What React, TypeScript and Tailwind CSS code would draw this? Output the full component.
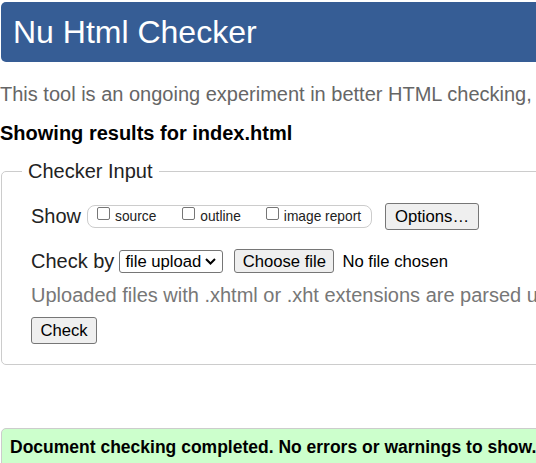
import React from 'react';

function Box({ label, className = '' }: { label: string; className?: string }) {
  return (
    <span className={`flex items-center ${className}`}>
      <span className="mb-[6px] h-[13px] w-[13px] rounded-[2px] border border-[#767676] bg-white" />
      <span className="ml-[5px] text-[13.75px] leading-[16px] text-[#222]">{label}</span>
    </span>
  );
}

export default function App() {
  return (
    <div className="h-[463px] w-full overflow-hidden bg-white font-['Liberation_Sans',Arial,sans-serif] text-[#222]">
      <div className="ml-[1px] mt-[2px] h-[60px] w-[800px] rounded-[5px] bg-[#365d95] pl-[12px] pt-[12px] text-[32px] leading-[37px] text-white">
        Nu Html Checker
      </div>

      <p className="mt-[21px] whitespace-nowrap text-[20px] leading-[23px] text-[#666]">
        This tool is an ongoing experiment in better HTML checking, and its behavior remains subject to change
      </p>

      <p className="mt-[16px] whitespace-nowrap text-[20px] font-bold leading-[23px] text-black">
        Showing results for index.html
      </p>

      <fieldset className="ml-[1px] mt-[15px] w-[800px] rounded-[5px] border border-[#ccc] pb-[20px] pl-[20px]">
        <legend className="px-[6px] text-[20px] leading-[23px] text-[#222]">Checker Input</legend>

        <div className="pl-[9px]">
          <div className="mt-[20px] flex h-[27px] items-center">
            <span className="text-[20px] leading-[23px]">Show</span>
            <div className="ml-[6px] flex h-[23px] w-[285px] items-center rounded-[8px] border border-[#ccc] pl-[9px]">
              <Box label="source" />
              <Box label="outline" className="ml-[26px]" />
              <Box label="image report" className="ml-[25px]" />
            </div>
            <button className="ml-[13px] flex h-[27px] w-[94px] items-center justify-center rounded-[3px] border border-[#767676] bg-[#efefef] text-[16.67px] leading-[19px] text-black">
              Options…
            </button>
          </div>

          <div className="mt-[19px] flex h-[24px] items-center">
            <span className="text-[20px] leading-[23px]">Check by</span>
            <span className="ml-[5px] flex h-[23px] w-[104px] items-center rounded-[3px] border border-[#767676] bg-white pl-[5px] text-[16.67px] leading-[19px] text-black">
              file upload
              <svg className="ml-[4px]" width="11" height="7" viewBox="0 0 11 7">
                <polyline points="1,1 5.5,5.5 10,1" fill="none" stroke="#000" strokeWidth="2" />
              </svg>
            </span>
            <button className="ml-[11px] flex h-[24px] w-[100px] items-center justify-center rounded-[3px] border border-[#767676] bg-[#efefef] text-[16.67px] leading-[19px] text-black">
              Choose file
            </button>
            <span className="ml-[8px] text-[16.67px] leading-[19px] text-black">No file chosen</span>
          </div>

          <p className="mt-[11px] whitespace-nowrap text-[20px] leading-[23px] text-[#777]">
            Uploaded files with .xhtml or .xht extensions are parsed using the XML parser.
          </p>

          <button className="mt-[10px] flex h-[27px] w-[66px] items-center justify-center rounded-[3px] border border-[#767676] bg-[#efefef] text-[16.67px] leading-[19px] text-black">
            Check
          </button>
        </div>
      </fieldset>

      <div className="ml-[1px] mt-[63px] h-[60px] w-[800px] rounded-[5px] border border-[#ccc] bg-[#ccffcc] pl-[8px] pt-[8px]">
        <p className="whitespace-nowrap text-[17.5px] font-bold leading-[20px] text-black">
          Document checking completed. No errors or warnings to show.
        </p>
      </div>
    </div>
  );
}
